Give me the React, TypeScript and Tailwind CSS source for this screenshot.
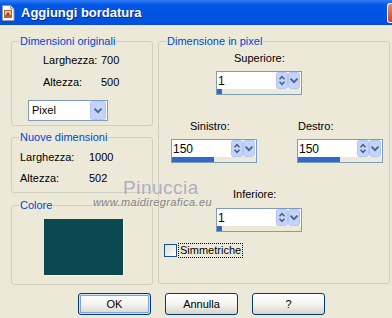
import React from 'react';

const sans = "font-['Liberation_Sans',Arial,sans-serif]";

function Group({ label, className, children }: { label: string; className?: string; children?: React.ReactNode }) {
  return (
    <div className={`relative rounded-[3px] border border-[#D0D0BF] ${className ?? ''}`}>
      <span className="absolute -top-[7px] left-[7px] bg-[#ECE9D8] px-[1px] text-[11px] leading-[13px] text-[#0046D5]">
        {label}
      </span>
      {children}
    </div>
  );
}

function SpinArrows() {
  return (
    <svg width="12" height="17" viewBox="0 0 12 17">
      <rect x="0.5" y="0.5" width="11" height="16" rx="2" fill="#C3D3FA" stroke="#B3C6F2" />
      <path d="M3.5 7.2 6 4.7l2.5 2.5" stroke="#4D6185" strokeWidth="1.6" fill="none" />
      <path d="M3.5 9.8 6 12.3l2.5-2.5" stroke="#4D6185" strokeWidth="1.6" fill="none" />
    </svg>
  );
}

function DropArrow({ w = 12, h = 17 }: { w?: number; h?: number }) {
  const cx = w / 2;
  const cy = h / 2;
  return (
    <svg width={w} height={h} viewBox={`0 0 ${w} ${h}`}>
      <rect x="0.5" y="0.5" width={w - 1} height={h - 1} rx="2" fill="#C3D3FA" stroke="#B3C6F2" />
      <path d={`M${cx - 3.5} ${cy - 1.8} ${cx} ${cy + 1.7} ${cx + 3.5} ${cy - 1.8}`} stroke="#4D6185" strokeWidth="1.8" fill="none" />
    </svg>
  );
}

function Spinner({ value, fill }: { value: string; fill: number }) {
  return (
    <div className="flex h-[24px] w-[86px] flex-col border border-[#7F9DB9] bg-white">
      <div className="flex h-[17px] items-center pr-[1px]">
        <span className="flex-1 pl-[1px] text-[12px] leading-none text-black">{value}</span>
        <SpinArrows />
        <DropArrow />
      </div>
      <div className="h-[5px] bg-[#ECE9D8]">
        <div className="h-full bg-[#316AC5]" style={{ width: fill }} />
      </div>
    </div>
  );
}

function Field({ label, pad, value, fill }: { label: string; pad: string; value: string; fill: number }) {
  return (
    <div className="flex flex-col">
      <span className={`${pad} text-[11px] leading-[13px] text-black`}>{label}</span>
      <div className="mt-[6px]">
        <Spinner value={value} fill={fill} />
      </div>
    </div>
  );
}

function XpButton({ children, primary }: { children: React.ReactNode; primary?: boolean }) {
  return (
    <button
      className={`h-[22px] w-[73px] rounded-[3px] border border-[#003C74] bg-linear-to-b from-white via-[#F4F4F0] to-[#D8D4CA] text-[11px] leading-none text-black ${
        primary ? 'shadow-[inset_0_0_0_1px_#CEE7FF,inset_0_0_0_2px_#7FA0E6]' : ''
      }`}
    >
      {children}
    </button>
  );
}

export default function App() {
  return (
    <div className={`h-[318px] w-[392px] overflow-hidden bg-[#ECE9D8] ${sans}`}>
      {/* title bar */}
      <div className="flex h-[25px] items-center bg-linear-to-b from-[#2E7BF5] via-[#0256E6] via-20% to-[#0050DC]">
        <svg width="15" height="16" viewBox="0 0 15 16" className="ml-[1px]">
          <path d="M1.5 0.5h8l3.5 3.5v11.5h-11.5z" fill="#fff" stroke="#9a9a9a" />
          <path d="M9.5 0.5v3.5h3.5" fill="#dcdcdc" stroke="#9a9a9a" />
          <rect x="3" y="5" width="8" height="8" fill="#B8643A" />
          <rect x="4" y="6" width="6" height="4" fill="#F2C493" />
          <circle cx="7" cy="9" r="1.6" fill="#8A3E20" />
        </svg>
        <span className="ml-[5px] text-[13px] font-bold text-white [text-shadow:1px_1px_0_#0A2A8A]">
          Aggiungi bordatura
        </span>
        <div className="ml-auto h-[20px] w-[5px] rounded-l-[3px] border-y border-l border-white bg-linear-to-b from-[#E88C6A] to-[#C8442A]" />
      </div>

      {/* body */}
      <div className="relative flex pt-[16px]">
        <div className="ml-[11px] flex w-[142px] flex-col">
          <Group label="Dimensioni originali" className="h-[85px]">
            <div className="pl-[31px] pt-[12px] text-[11px] leading-[13px] text-black">
              <div className="flex">
                <span className="w-[58px]">Larghezza:</span>
                <span>700</span>
              </div>
              <div className="mt-[9px] flex">
                <span className="w-[58px]">Altezza:</span>
                <span>500</span>
              </div>
            </div>
            <div className="ml-[16px] mt-[11px] flex h-[21px] w-[80px] items-center border border-[#7F9DB9] bg-white pr-[1px]">
              <span className="flex-1 pl-[3px] text-[11px] text-black">Pixel</span>
              <DropArrow w={16} h={19} />
            </div>
          </Group>

          <Group label="Nuove dimensioni" className="mt-[11px] h-[56px]">
            <div className="pl-[8px] pt-[13px] text-[11px] leading-[13px] text-black">
              <div className="flex">
                <span className="w-[69px]">Larghezza:</span>
                <span>1000</span>
              </div>
              <div className="mt-[8px] flex">
                <span className="w-[69px]">Altezza:</span>
                <span>502</span>
              </div>
            </div>
          </Group>

          <Group label="Colore" className="mt-[12px] h-[80px]">
            <div className="ml-[32px] mt-[13px] h-[57px] w-[80px] border-b border-r border-[#F6F5EF] bg-[#0C4850]" />
          </Group>
        </div>

        <Group label="Dimensione in pixel" className="ml-[5px] h-[243px] w-[232px]">
          <div className="ml-[57px] mt-[10px]">
            <Field label="Superiore:" pad="pl-[18px]" value="1" fill={5} />
          </div>
          <div className="ml-[12px] mt-[25px] flex gap-[40px]">
            <Field label="Sinistro:" pad="pl-[19px]" value="150" fill={42} />
            <Field label="Destro:" pad="pl-[1px]" value="150" fill={42} />
          </div>
          <div className="ml-[57px] mt-[25px]">
            <div className="flex flex-col">
              <span className="pl-[17px] text-[11px] leading-[13px] text-black">Inferiore:</span>
              <div className="mt-[7px]">
                <Spinner value="1" fill={5} />
              </div>
            </div>
          </div>
          <div className="ml-[5px] mt-[11px] flex items-center">
            <span className="h-[13px] w-[13px] border border-[#1C5180] bg-linear-to-br from-[#DCDCD7] to-white" />
            <span className="ml-[1px] border border-dotted border-black px-[1px] text-[11px] leading-[13px] text-black">
              Simmetriche
            </span>
          </div>
        </Group>

        {/* watermark */}
        <span className="pointer-events-none absolute left-[123px] top-[153px] text-[19px] leading-none tracking-[0.5px] text-[#A6A6BE]/90">
          Pinuccia
        </span>
        <span className="pointer-events-none absolute left-[93px] top-[172px] text-[11px] italic leading-none tracking-[0.4px] text-[#858585]">
          www.maidiregrafica.eu
        </span>
      </div>

      {/* buttons */}
      <div className="mt-[8px] flex gap-[14px] pl-[78px]">
        <XpButton primary>OK</XpButton>
        <XpButton>Annulla</XpButton>
        <XpButton>?</XpButton>
      </div>
    </div>
  );
}
